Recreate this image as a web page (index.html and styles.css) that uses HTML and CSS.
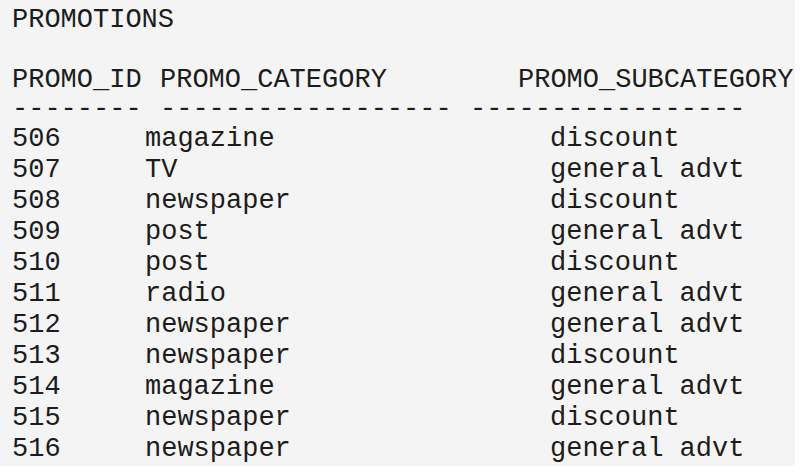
FILE: index.html
```html
<!DOCTYPE html>
<html lang="en">

<head>
    <meta charset="UTF-8">
    <title>PROMOTIONS</title>
    <link rel="stylesheet" href="styles.css">
</head>

<body>
    <div class="screen">
        <div class="title">PROMOTIONS</div>
        <div class="row head">
            <span>PROMO_ID</span>
            <span>PROMO_CATEGORY</span>
            <span>PROMO_SUBCATEGORY</span>
        </div>
        <div class="row rule">
            <span>--------</span>
            <span>------------------</span>
            <span>-----------------</span>
        </div>
        <div class="rows">
            <div class="row data"><span>506</span><span>magazine</span><span>discount</span></div>
            <div class="row data"><span>507</span><span>TV</span><span>general advt</span></div>
            <div class="row data"><span>508</span><span>newspaper</span><span>discount</span></div>
            <div class="row data"><span>509</span><span>post</span><span>general advt</span></div>
            <div class="row data"><span>510</span><span>post</span><span>discount</span></div>
            <div class="row data"><span>511</span><span>radio</span><span>general advt</span></div>
            <div class="row data"><span>512</span><span>newspaper</span><span>general advt</span></div>
            <div class="row data"><span>513</span><span>newspaper</span><span>discount</span></div>
            <div class="row data"><span>514</span><span>magazine</span><span>general advt</span></div>
            <div class="row data"><span>515</span><span>newspaper</span><span>discount</span></div>
            <div class="row data"><span>516</span><span>newspaper</span><span>general advt</span></div>
        </div>
    </div>
</body>

</html>
```

FILE: styles.css
```css
body,
html {
    margin: 0;
    padding: 0;
    background: #ffffff;
}

.screen {
    width: 783px;
    height: 461px;
    padding: 5px 0 0 12px;
    background-color: #f4f4f4;
    color: #1c1c1c;
    font-family: 'Courier New', 'Nimbus Mono PS', 'FreeMono', 'Liberation Mono', monospace;
    font-size: 27px;
    line-height: 31px;
}

.row span {
    white-space: pre;
}

.title {
    margin-bottom: 30px;
}

.row {
    display: grid;
}

.head {
    grid-template-columns: 148px 358px auto;
    line-height: 29px;
}

.rule {
    grid-template-columns: 148px 310px auto;
    line-height: 29px;
}

.data {
    grid-template-columns: 133px 405px auto;
}
```
